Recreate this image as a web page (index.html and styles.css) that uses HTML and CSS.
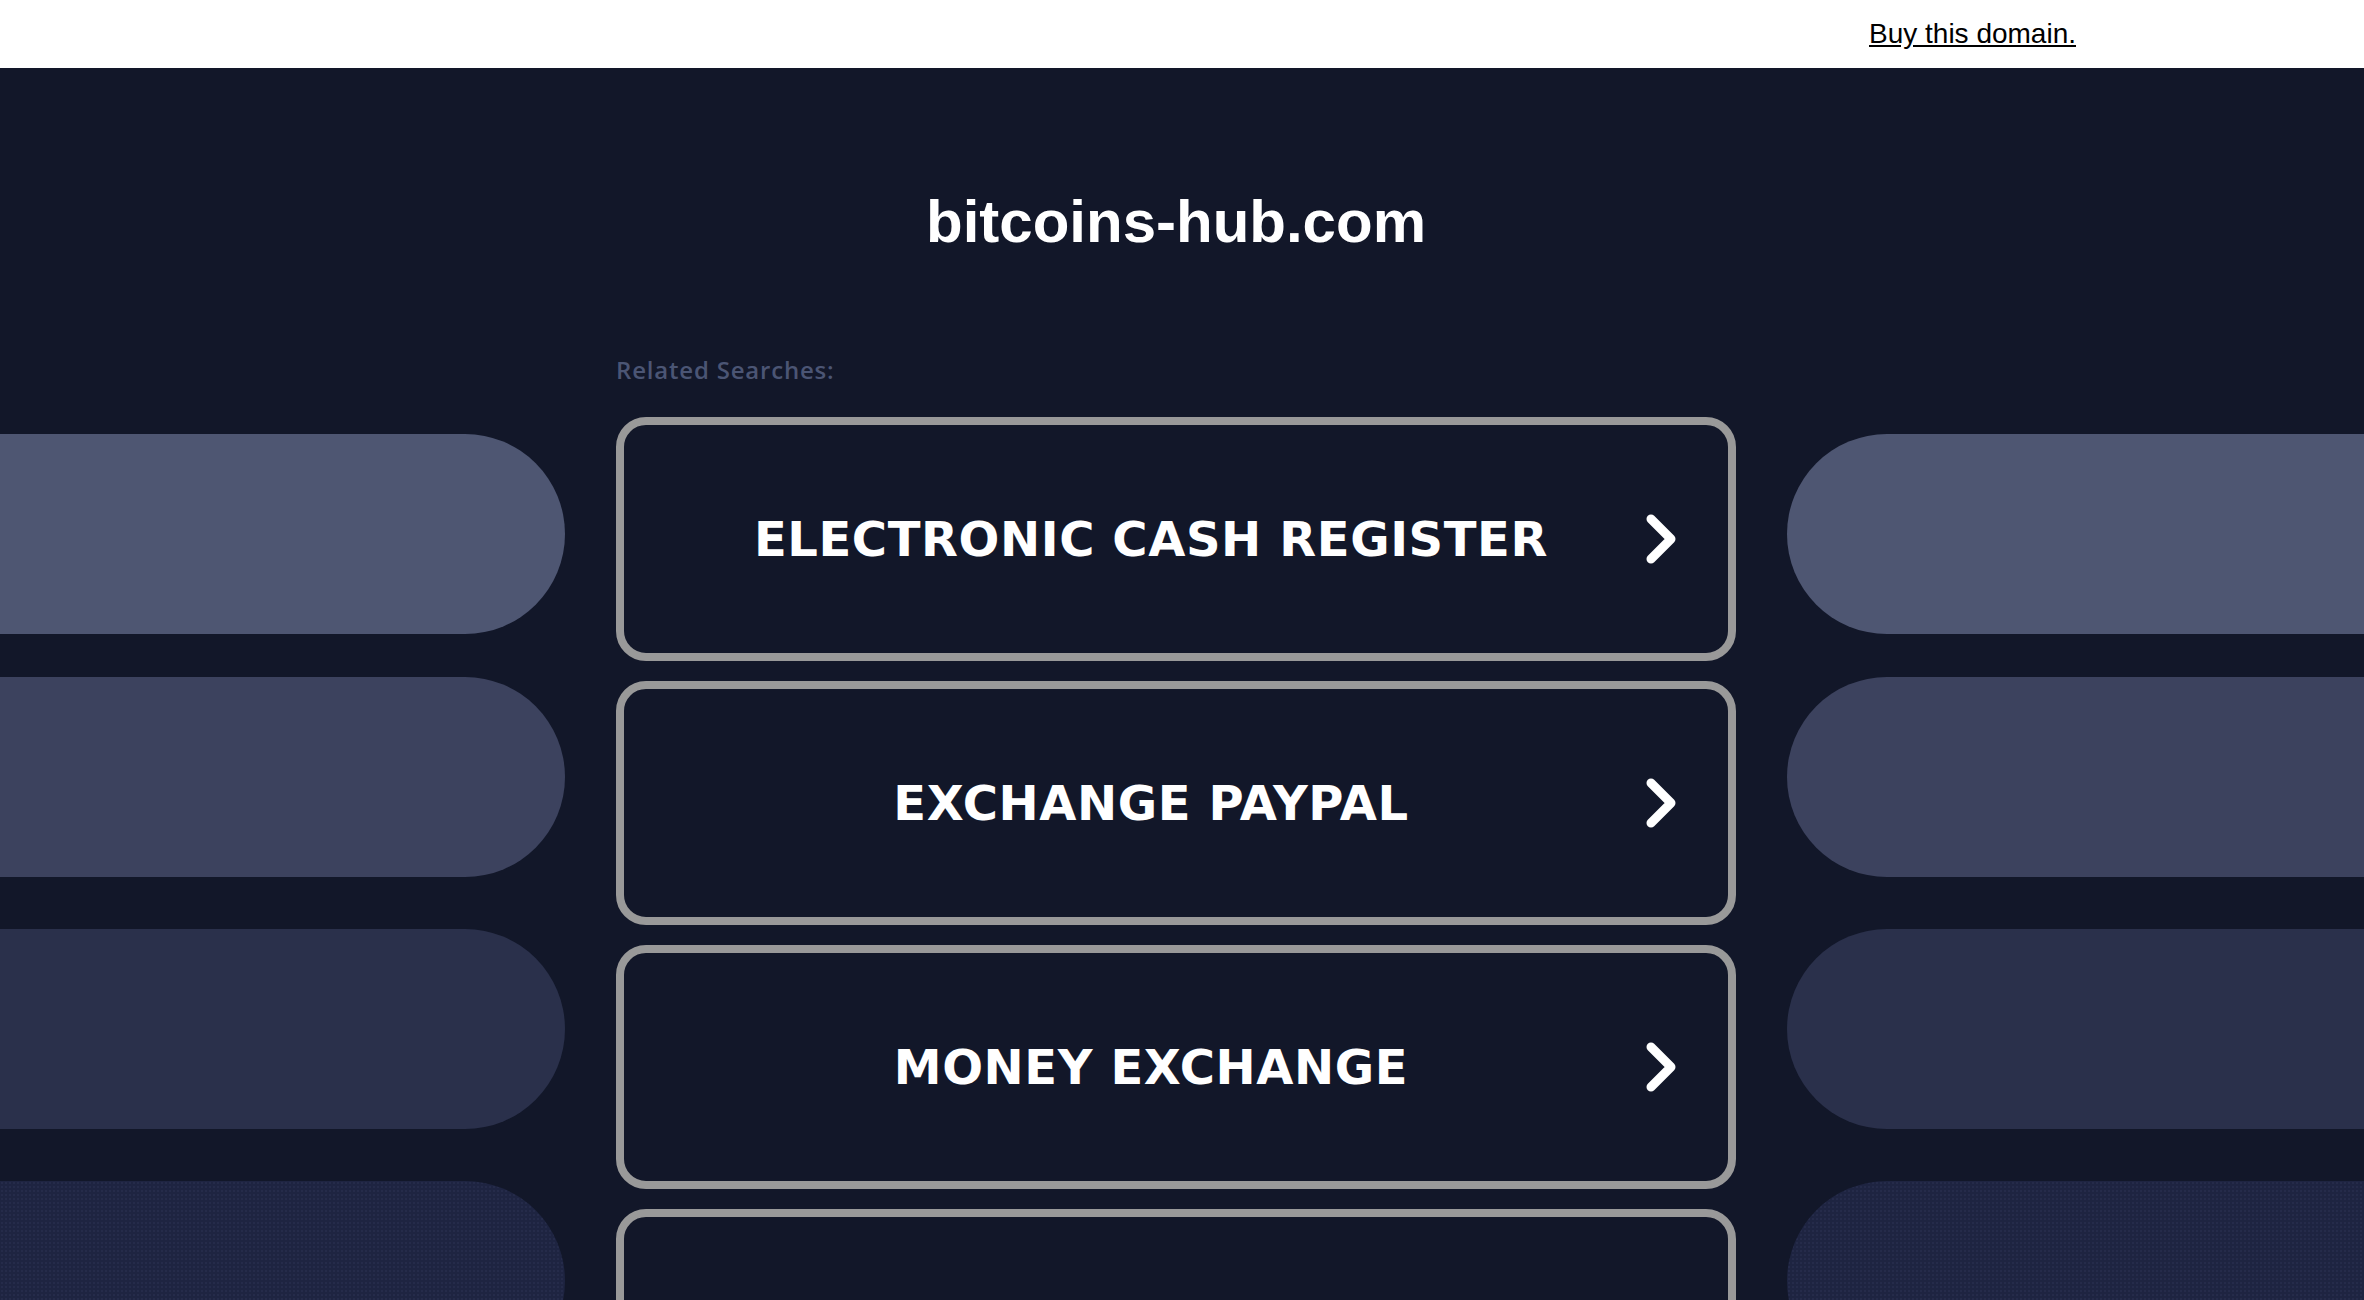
FILE: index.html
```html
<!DOCTYPE html>
<html lang="en">
<head>
  <meta charset="UTF-8">
  <meta name="viewport" content="width=device-width, initial-scale=1.0">
  <title>bitcoins-hub.com</title>
  <link rel="stylesheet" href="styles.css">
</head>
<body>
  <div class="topbar">
    <a href="#" class="buy-link">Buy this domain.</a>
  </div>

  <div class="page">
    <div class="side side-left">
      <div class="pill pill-1"></div>
      <div class="pill pill-2"></div>
      <div class="pill pill-3"></div>
      <div class="pill pill-4"></div>
    </div>

    <div class="content">
      <h1 class="domain">bitcoins-hub.com</h1>
      <p class="related">Related Searches:</p>

      <ul class="links">
        <li><a href="#" class="link-card"><span class="link-text">ELECTRONIC CASH REGISTER</span><svg class="chevron" viewBox="0 0 32 52"><path d="M6 6 L26 26 L6 46"/></svg></a></li>
        <li><a href="#" class="link-card"><span class="link-text">EXCHANGE PAYPAL</span><svg class="chevron" viewBox="0 0 32 52"><path d="M6 6 L26 26 L6 46"/></svg></a></li>
        <li><a href="#" class="link-card"><span class="link-text">MONEY EXCHANGE</span><svg class="chevron" viewBox="0 0 32 52"><path d="M6 6 L26 26 L6 46"/></svg></a></li>
        <!-- last card runs past the fold -->
        <li><a href="#" class="link-card"><span class="link-text"></span><svg class="chevron" viewBox="0 0 32 52"><path d="M6 6 L26 26 L6 46"/></svg></a></li>
      </ul>
    </div>

    <div class="side side-right">
      <div class="pill pill-1"></div>
      <div class="pill pill-2"></div>
      <div class="pill pill-3"></div>
      <div class="pill pill-4"></div>
    </div>
  </div>
</body>
</html>
```

FILE: styles.css
```css
html, body {
  margin: 0;
  padding: 0;
  overflow: hidden;
}

body {
  background-color: #121729;
  font-family: "Liberation Sans", Arial, sans-serif;
}

.topbar {
  height: 68px;
  box-sizing: border-box;
  background-color: #ffffff;
  display: flex;
  justify-content: flex-end;
  padding: 18px 288px 0 0;
}

.buy-link {
  color: #000000;
  font-size: 28px;
  line-height: 32px;
  text-decoration: underline;
}

.page {
  display: grid;
  grid-template-columns: 565px 1120px 1fr;
  column-gap: 51px;
}

/* decorative pills on both sides */
.side {
  display: flex;
  flex-direction: column;
  gap: 52px;
  padding-top: 366px;
}

.pill {
  height: 200px;
}

.side .pill-1 {
  margin-bottom: -9px;
}

.side-left .pill {
  border-radius: 0 100px 100px 0;
}

.side-right .pill {
  border-radius: 100px 0 0 100px;
}

.pill-1 { background-color: #4e5672; }
.pill-2 { background-color: #3c425e; }
.pill-3 { background-color: #2a304b; }
.pill-4 {
  background-color: #1e2441;
  background-image: radial-gradient(circle, #252b4a 0.9px, transparent 1.2px);
  background-size: 4px 4px;
}

.content {
  padding-top: 119px;
}

.domain {
  margin: 0;
  color: #ffffff;
  font-size: 60px;
  line-height: 69px;
  font-weight: bold;
  text-align: center;
}

.related {
  margin: 99px 0 0 0;
  color: #4b5574;
  font-family: "Open Sans", sans-serif;
  font-weight: 600;
  font-size: 24px;
  line-height: 29px;
  letter-spacing: 0.8px;
}

.links {
  list-style: none;
  margin: 33px 0 0 0;
  padding: 0;
  display: flex;
  flex-direction: column;
  gap: 20px;
}

.link-card {
  display: flex;
  align-items: center;
  height: 244px;
  box-sizing: border-box;
  border: 8px solid #999999;
  border-radius: 30px;
  padding: 0 51px 0 33px;
  text-decoration: none;
}

.link-text {
  flex: 1;
  text-align: center;
  color: #ffffff;
  font-family: "DejaVu Sans", Verdana, sans-serif;
  font-weight: bold;
  font-size: 48px;
  letter-spacing: 0.6px;
}

.chevron {
  width: 32px;
  height: 52px;
  fill: none;
  stroke: #ffffff;
  stroke-width: 9;
  stroke-linecap: round;
  stroke-linejoin: round;
}
```
